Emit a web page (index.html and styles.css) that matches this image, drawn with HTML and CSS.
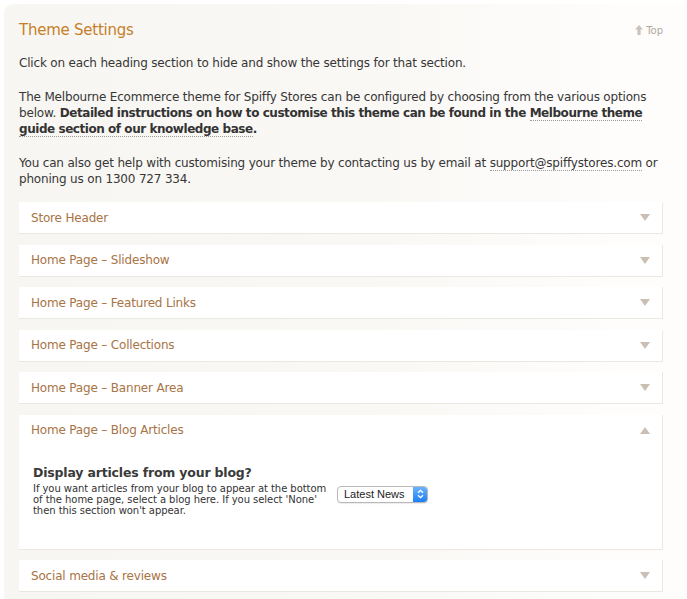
FILE: index.html
```html
<!DOCTYPE html>
<html lang="en">
<head>
  <meta charset="UTF-8">
  <meta name="viewport" content="width=device-width, initial-scale=1.0">
  <title>Theme Settings</title>
  <link rel="stylesheet" href="styles.css">
</head>
<body>
  <div class="panel">
    <div class="page-head">
      <h1>Theme Settings</h1>
      <a class="top-link" href="#">
        <svg width="8" height="10" viewBox="0 0 8 10"><path d="M4 0 L8 4.5 H5.6 V10 H2.4 V4.5 H0 Z" fill="#cbc3bb"/></svg>
        Top
      </a>
    </div>

    <p class="intro first">Click on each heading section to hide and show the settings for that section.</p>
    <p class="intro">The Melbourne Ecommerce theme for Spiffy Stores can be configured by choosing from the various options below. <b>Detailed instructions on how to customise this theme can be found in the <a href="#">Melbourne theme guide section of our knowledge base</a>.</b></p>
    <p class="intro">You can also get help with customising your theme by contacting us by email at <a href="#">support@spiffystores.com</a> or phoning us on 1300 727 334.</p>

    <div class="sections">
      <div class="section">
        <div class="section-head"><span>Store Header</span><i class="arrow down"></i></div>
      </div>
      <div class="section">
        <div class="section-head"><span>Home Page – Slideshow</span><i class="arrow down"></i></div>
      </div>
      <div class="section">
        <div class="section-head"><span>Home Page – Featured Links</span><i class="arrow down"></i></div>
      </div>
      <div class="section">
        <div class="section-head"><span>Home Page – Collections</span><i class="arrow down"></i></div>
      </div>
      <div class="section">
        <div class="section-head"><span>Home Page – Banner Area</span><i class="arrow down"></i></div>
      </div>
      <div class="section open">
        <div class="section-head"><span>Home Page – Blog Articles</span><i class="arrow up"></i></div>
        <div class="section-body">
          <h3>Display articles from your blog?</h3>
          <div class="field">
            <p class="help">If you want articles from your blog to appear at the bottom of the home page, select a blog here. If you select 'None' then this section won't appear.</p>
            <div class="select">
              <span>Latest News</span>
              <span class="stepper">
                <svg width="7" height="10" viewBox="0 0 7 10"><path d="M1 3.8 L3.5 1.3 L6 3.8 M1 6.2 L3.5 8.7 L6 6.2" fill="none" stroke="#fff" stroke-width="1.3"/></svg>
              </span>
            </div>
          </div>
        </div>
      </div>
      <div class="section">
        <div class="section-head"><span>Social media &amp; reviews</span><i class="arrow down"></i></div>
      </div>
    </div>
  </div>
</body>
</html>
```

FILE: styles.css
```css
* {
  box-sizing: border-box;
}

body {
  margin: 0;
  background-color: #fff;
  font-family: "DejaVu Sans", sans-serif;
  font-size: 12px;
  letter-spacing: -0.18px;
  color: #363636;
}

.panel {
  margin: 4px 0 0 4px;
  padding: 15px 24px 20px 15px;
  border-radius: 9px 0 0 0;
  background: linear-gradient(to right, #f8f6f2 0%, #faf8f5 55%, #fefdfc 90%);
  min-height: 600px;
}

.page-head {
  display: flex;
  justify-content: space-between;
  align-items: center;
  height: 22px;
}

h1 {
  margin: 0;
  font-size: 15px;
  font-weight: normal;
  letter-spacing: -0.25px;
  color: #c4802a;
}

.top-link {
  display: flex;
  align-items: center;
  gap: 3px;
  font-size: 10px;
  letter-spacing: 0;
  color: #b1a79e;
  text-decoration: none;
}

.intro {
  margin: 18px 0 0;
  line-height: 16px;
}

.intro.first {
  margin-top: 14px;
}

.intro a {
  color: inherit;
  text-decoration: none;
  border-bottom: 1px dotted #9a9a9a;
}

.intro b {
  color: #333;
  letter-spacing: -0.45px;
}

.sections {
  margin-top: 15px;
}

.section {
  background-color: #fff;
  border-right: 1px solid #ebe7e1;
  border-bottom: 1px solid #ebe7e1;
  margin-bottom: 10.5px;
}

.section-head {
  height: 31px;
  display: flex;
  align-items: center;
  justify-content: space-between;
  padding: 0 12px 0 12px;
  font-size: 12px;
  color: #a87345;
}

.arrow {
  width: 0;
  height: 0;
  border-left: 5.5px solid transparent;
  border-right: 5.5px solid transparent;
}

.arrow.down {
  border-top: 7px solid #cbbfb4;
}

.arrow.up {
  border-bottom: 7px solid #cbbfb4;
}

.section-body {
  padding: 19px 14px 33px;
}

.section-body h3 {
  margin: 0;
  font-size: 12.5px;
  line-height: 16px;
  color: #3a3a3a;
}

.field {
  display: flex;
  align-items: flex-start;
  gap: 2px;
  margin-top: 2px;
}

.help {
  margin: 0;
  width: 302px;
  font-size: 10px;
  line-height: 11px;
  letter-spacing: -0.05px;
  color: #333;
}

.select {
  display: flex;
  align-items: stretch;
  width: 91px;
  height: 17px;
  margin-top: 3px;
  border: 1px solid #b9b9b9;
  border-radius: 4px;
  background-color: #fff;
  box-shadow: 0 1px 1px rgba(0, 0, 0, 0.08);
  font-family: "Liberation Sans", sans-serif;
  font-size: 11px;
  letter-spacing: 0;
  color: #222;
  overflow: hidden;
}

.select span:first-child {
  flex: 1;
  padding-left: 6px;
  line-height: 15px;
}

.stepper {
  width: 14px;
  display: flex;
  align-items: center;
  justify-content: center;
  background: linear-gradient(#6ab4fb, #1c7ff6);
}
```
